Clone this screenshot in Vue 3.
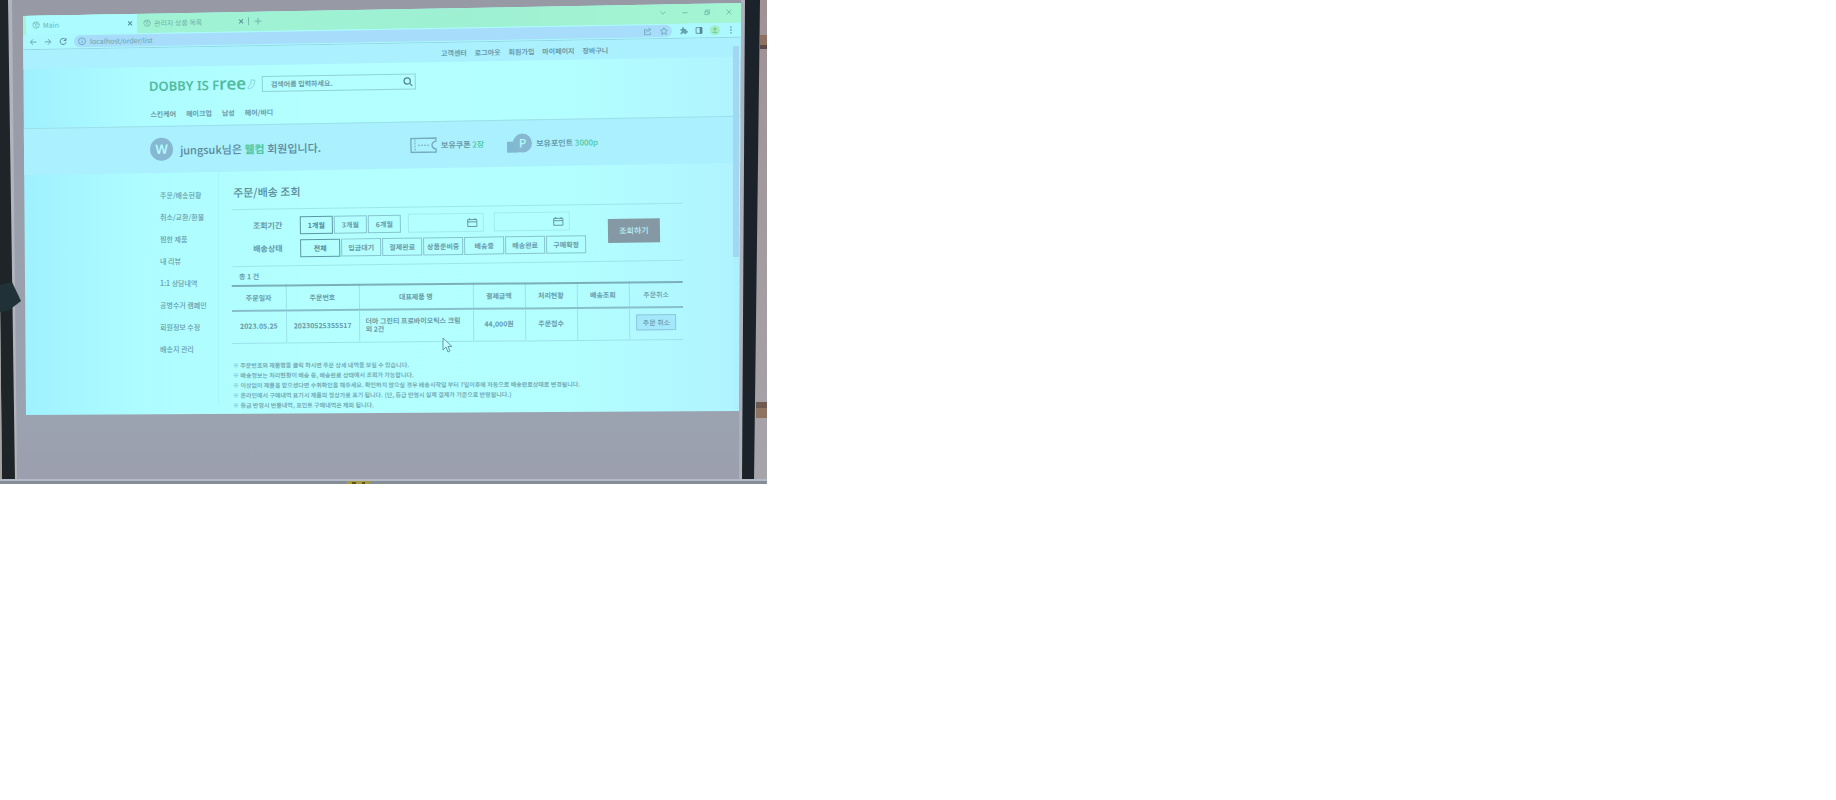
<script setup>
import { ref } from 'vue'

const topLinks = ['고객센터', '로그아웃', '회원가입', '마이페이지', '장바구니']
const categories = ['스킨케어', '메이크업', '남성', '헤어/바디']
const sideLinks = ['주문/배송현황', '취소/교환/환불', '찜한 제품', '내 리뷰', '1:1 상담내역', '공병수거 캠페인', '회원정보 수정', '배송지 관리']
const periods = ['1개월', '3개월', '6개월']
const states = ['전체', '입금대기', '결제완료', '상품준비중', '배송중', '배송완료', '구매확정']
const columns = ['주문일자', '주문번호', '대표제품 명', '결제금액', '처리현황', '배송조회', '주문취소']
const notes = [
  '※ 주문번호와 제품명을 클릭 하시면 주문 상세 내역을 보실 수 있습니다.',
  '※ 배송정보는 처리현황이 배송 중, 배송완료 상태에서 조회가 가능합니다.',
  '※ 이상없이 제품을 받으셨다면 수취확인을 해주세요. 확인하지 않으실 경우 배송시작일 부터 7일이후에 자동으로 배송완료상태로 변경됩니다.',
  '※ 온라인에서 구매내역 표기시 제품의 정상가로 표기 됩니다. (단, 등급 반영시 실제 결제가 기준으로 반영됩니다.)',
  '※ 등급 반영시 반품내역, 포인트 구매내역은 제외 됩니다.'
]
const period = ref('1개월')
const state = ref('전체')
const dateFrom = ref('')
const dateTo = ref('')
</script>

<template>
  <div class="photo">
    <svg class="room" viewBox="0 0 767 484" preserveAspectRatio="none" aria-hidden="true">
      <defs>
        <linearGradient id="wall" x1="0" y1="0" x2="0" y2="1">
          <stop offset="0" stop-color="#9799a4" />
          <stop offset="0.84" stop-color="#9ba3b0" />
          <stop offset="1" stop-color="#9b9fae" />
        </linearGradient>
        <linearGradient id="side" x1="0" y1="0" x2="0" y2="1">
          <stop offset="0" stop-color="#9f9295" />
          <stop offset="1" stop-color="#a7a4ab" />
        </linearGradient>
      </defs>
      <rect width="767" height="484" fill="url(#wall)" />
      <path d="M8 0H12L17 479H14Z" fill="#b1b4bd" />
      <path d="M0 0H8L15 479H2L0 300Z" fill="#1e2427" />
      <path d="M0 290L2 479H0Z" fill="#a6a4a2" />
      <path d="M760 0H767V484H754Z" fill="url(#side)" />
      <path d="M741 0H745L743 479H739Z" fill="#aeb2bd" />
      <path d="M745 0H760L754 482H742Z" fill="#1b2229" />
      <path d="M760 35H767V49H760Z" fill="#8e7160" />
      <path d="M760 45H767V49H760Z" fill="#5d4a46" />
      <path d="M756 402H767V418H756Z" fill="#8c7460" />
      <path d="M756 402H767V408H756Z" fill="#6e5a50" />
      <path d="M0 479H767V481H0Z" fill="#b3bcc6" />
      <path d="M0 481H767V484H0Z" fill="#858d97" />
      <path d="M0 285L12 282L21 301L8 311L0 312Z" fill="#203238" />
      <path d="M347 481H371L369 484H347Z" fill="#a79b3d" />
      <path d="M352 482H356V484H352ZM362 482H365V484H362Z" fill="#5a5420" />
    </svg>

    <div class="screen">
      <header class="tabs">
        <div class="tab active">
          <svg class="i8" viewBox="0 0 16 16"><circle cx="8" cy="8" r="6.5" /><path d="M3 4L8 7L7 10L11 13M9 2L8 5L13 7" /></svg>
          <span>Main</span>
          <button class="bare" aria-label="탭 닫기"><svg class="i6" viewBox="0 0 12 12"><path d="M2 2L10 10M10 2L2 10" /></svg></button>
        </div>
        <div class="tab">
          <svg class="i8" viewBox="0 0 16 16"><circle cx="8" cy="8" r="6.5" /><path d="M3 4L8 7L7 10L11 13M9 2L8 5L13 7" /></svg>
          <span>관리자 상품 목록</span>
          <button class="bare" aria-label="탭 닫기"><svg class="i6" viewBox="0 0 12 12"><path d="M2 2L10 10M10 2L2 10" /></svg></button>
        </div>
        <button class="bare plus" aria-label="새 탭"><svg class="i8" viewBox="0 0 12 12"><path d="M6 1V11M1 6H11" /></svg></button>
        <div class="controls">
          <button class="bare" aria-label="탭 검색"><svg class="i6" viewBox="0 0 12 12"><path d="M1 3L6 8L11 3" /></svg></button>
          <button class="bare" aria-label="최소화"><svg class="i6" viewBox="0 0 12 12"><path d="M1 6H11" /></svg></button>
          <button class="bare" aria-label="이전 크기로"><svg class="i6" viewBox="0 0 12 12"><path d="M2 4H8V11H2ZM4 4V1H11V9H8" /></svg></button>
          <button class="bare" aria-label="닫기"><svg class="i6" viewBox="0 0 12 12"><path d="M1 1L11 11M11 1L1 11" /></svg></button>
        </div>
      </header>

      <div class="toolbar">
        <button class="bare" aria-label="뒤로"><svg class="i8" viewBox="0 0 12 12"><path d="M11 6H2M6 2L2 6L6 10" /></svg></button>
        <button class="bare" aria-label="앞으로"><svg class="i8" viewBox="0 0 12 12"><path d="M1 6H10M6 2L10 6L6 10" /></svg></button>
        <button class="bare dark" aria-label="새로고침"><svg class="i8" viewBox="0 0 12 12"><path d="M10 3.5A4.5 4.5 0 1 0 10.500 7M10.500 1V4.500H7" /></svg></button>
        <div class="omnibox">
          <svg class="i8" viewBox="0 0 14 14"><circle cx="7" cy="7" r="6" /><path d="M7 6V10M7 3.500V4.500" /></svg>
          <input aria-label="주소" value="localhost/order/list" />
          <svg class="i8" viewBox="0 0 14 14"><path d="M5 4H1V13H11V9M4 9Q5 4 10 4M8 1L12 4L8 7" /></svg>
          <svg class="i8" viewBox="0 0 14 14"><path d="M7 1L9 5L13 5.500L10 8.500L11 13L7 10.500L3 13L4 8.500L1 5.500L5 5Z" /></svg>
        </div>
        <svg class="i8 solid" viewBox="0 0 14 14"><path d="M1 4H4C3 0 8 0 7.500 4H11V7C15 6.500 15 11 11 10.500V13H8C8 10 4 10 4 13H1V10C4 10 4 7 1 7Z" /></svg>
        <svg class="i8 dark" viewBox="0 0 14 14"><path d="M2 2H12V12H2Z" /><path d="M9 2H12V12H9Z" fill="currentColor" /></svg>
        <svg class="avatar" viewBox="0 0 16 16"><circle cx="8" cy="8" r="8" fill="#a3edc0" /><circle cx="8" cy="6" r="2.500" fill="#71cba0" /><path d="M3 12.500Q8 7.500 13 12.500Z" fill="#71cba0" /></svg>
        <svg class="i8 solid" viewBox="0 0 14 14"><circle cx="7" cy="2" r="1.500" /><circle cx="7" cy="7" r="1.500" /><circle cx="7" cy="12" r="1.500" /></svg>
      </div>

      <div class="page">
        <nav class="topnav" aria-label="회원 메뉴">
          <a v-for="l in topLinks" :key="l" href="#">{{ l }}</a>
        </nav>

        <div class="brandbar">
          <div class="brandrow">
            <a class="logo" href="#"><span>DOBBY IS F<b>ree</b></span>
              <svg viewBox="0 0 14 18"><path d="M7 2L13 3L11 10Q9 15 4 16Q0 16 2 13L6 9Z" /></svg>
            </a>
            <form class="search" @submit.prevent>
              <input type="text" aria-label="검색어" placeholder="검색어를 입력하세요." />
              <button class="bare" aria-label="검색"><svg viewBox="0 0 16 16"><circle cx="7" cy="7" r="5" /><path d="M11 11L15 15" /></svg></button>
            </form>
          </div>
          <nav class="cats" aria-label="카테고리">
            <a v-for="c in categories" :key="c" href="#">{{ c }}</a>
          </nav>
        </div>

        <section class="member">
          <span class="grade">W</span>
          <p class="hello">jungsuk님은 <em>웰컴</em> 회원입니다.</p>
          <svg class="coupon" viewBox="0 0 27 16">
            <path d="M1 1H26V4Q22 5 22 8Q22 11 26 12V15H1Z" />
            <path class="thin" d="M5 2V14" stroke-dasharray="2 1" />
            <path class="thin" d="M8 8H20" stroke-dasharray="2 1" />
          </svg>
          <p class="asset">보유쿠폰 <em>2장</em></p>
          <span class="point"><span>P</span></span>
          <p class="asset">보유포인트 <em>3000p</em></p>
        </section>

        <div class="body">
          <nav class="side" aria-label="마이페이지 메뉴">
            <a v-for="l in sideLinks" :key="l" href="#">{{ l }}</a>
          </nav>
          <main>
            <h1>주문/배송 조회</h1>
            <form class="filters" @submit.prevent>
              <div class="fields">
                <div class="row">
                  <span class="label">조회기간</span>
                  <div class="group">
                    <button v-for="p in periods" :key="p" type="button" class="opt short" :class="{ on: p === period }" @click="period = p">{{ p }}</button>
                  </div>
                  <label class="date"><input v-model="dateFrom" aria-label="시작일" /><svg viewBox="0 0 12 10"><path d="M1 1.500H11V9H1ZM1 4H11M3 0V2M9 0V2" /></svg></label>
                  <label class="date"><input v-model="dateTo" aria-label="종료일" /><svg viewBox="0 0 12 10"><path d="M1 1.500H11V9H1ZM1 4H11M3 0V2M9 0V2" /></svg></label>
                </div>
                <div class="row">
                  <span class="label">배송상태</span>
                  <div class="group">
                    <button v-for="s in states" :key="s" type="button" class="opt" :class="{ on: s === state }" @click="state = s">{{ s }}</button>
                  </div>
                </div>
              </div>
              <button class="submit">조회하기</button>
            </form>
            <p class="total">총 1 건</p>
            <table>
              <colgroup><col class="c1" /><col class="c2" /><col class="c3" /><col class="c4" /><col class="c4" /><col class="c4" /><col class="c1" /></colgroup>
              <thead>
                <tr><th v-for="c in columns" :key="c" scope="col">{{ c }}</th></tr>
              </thead>
              <tbody>
                <tr>
                  <td>2023.05.25</td>
                  <td>20230525355517</td>
                  <td class="name">더마 그린티 프로바이오틱스 크림 외 2건</td>
                  <td>44,000원</td>
                  <td>주문접수</td>
                  <td></td>
                  <td><button class="cancel">주문 취소</button></td>
                </tr>
              </tbody>
            </table>
            <ul class="notes">
              <li v-for="n in notes" :key="n">{{ n }}</li>
            </ul>
          </main>
        </div>
        <div class="scrollbar"><i></i></div>
      </div>
      <svg class="cursor" viewBox="0 0 11 16" aria-hidden="true"><path d="M1 1V13L4 10L6 15L8 14L6 9.500H10Z" /></svg>
    </div>
  </div>
</template>

<style>
body {
  margin: 0;
  background: #fff;
}
</style>

<style scoped>
* {
  box-sizing: border-box;
}
.photo {
  position: relative;
  width: 100%;
  max-width: 767px;
  padding: 3px 26px 69px 23px;
  font-family: "Noto Sans CJK KR", "Noto Sans", sans-serif;
  font-size: 7px;
  line-height: 10px;
  color: #6a9aa8;
}
.screen {
  position: relative;
  height: 412px;
  overflow: hidden;
  padding-top: 6px;
  background: linear-gradient(90deg, #9ff1ff 0, #adfcff 16%, #b4ffff 40%, #b3feff 76%, #aff3ff 100%);
  clip-path: polygon(0 13px, 100% 0, calc(100% - 2px) 408px, 3px 100%);
}
a {
  color: inherit;
  text-decoration: none;
}
p, h1, ul {
  margin: 0;
  padding: 0;
}
em {
  font-style: normal;
  color: #4ec79f;
}
button, input {
  font: inherit;
  color: inherit;
}
input {
  min-width: 0;
  flex: 1;
  padding: 0;
  border: 0;
  outline: 0;
  background: none;
}
.bare {
  display: flex;
  padding: 0;
  border: 0;
  background: none;
}
svg {
  flex: none;
  fill: none;
  stroke: currentColor;
}
.room {
  position: absolute;
  inset: 0;
  width: 100%;
  height: 100%;
  stroke: none;
}
.i8 {
  width: 8px;
  height: 8px;
  stroke-width: 1.4;
}
.i6 {
  width: 6px;
  height: 6px;
  stroke-width: 2;
}
.solid {
  fill: currentColor;
  stroke: none;
}
.avatar {
  width: 10px;
  height: 10px;
  stroke: none;
}

.tabs {
  display: flex;
  align-items: center;
  height: 20px;
  padding: 0 8px 0 3px;
  background: linear-gradient(90deg, #a2f4d6, #9df0d2 60%, #a4f5d2);
  box-shadow: 0 -8px 0 #9ff1d4;
  transform: rotate(-1deg);
  color: #6fb2ac;
}
.tab {
  display: flex;
  align-items: center;
  gap: 3px;
  width: 111px;
  height: 20px;
  padding: 0 4px 0 6px;
}
.tab.active {
  background: #acfbff;
  box-shadow: 0 -8px 0 #acfbff;
  border-radius: 0 4px 0 0;
}
.tab span {
  flex: 1;
}
.tab .bare {
  color: #548e94;
}
.plus {
  padding-left: 5px;
  border-left: 1px solid #76bcae;
}
.controls {
  display: flex;
  gap: 16px;
  margin: 0 1px 3px auto;
}
.controls svg {
  stroke-width: 1.6;
}
.toolbar {
  display: flex;
  align-items: center;
  gap: 7px;
  height: 15px;
  padding: 0 6px;
  background: #acf8ff;
  border-bottom: 1px solid #94d5e5;
  transform: rotate(-1deg);
  color: #64a3b2;
}
.omnibox {
  display: flex;
  flex: 1;
  align-items: center;
  gap: 4px;
  height: 12px;
  margin-right: 1px;
  padding: 0 4px;
  border-radius: 6px;
  background: #a7dcfb;
}
.omnibox svg:last-child {
  margin-left: 4px;
}
.dark {
  color: #568592;
}

.page {
  position: relative;
}
.topnav {
  display: flex;
  align-items: center;
  gap: 8px;
  height: 19px;
  padding-left: 418px;
  background: #aaf0ff;
  transform: rotate(-1deg);
  font-weight: 700;
}
.brandbar {
  height: 59px;
  padding: 10px 0 0 126px;
  transform: rotate(-1deg);
}
.brandrow {
  display: flex;
  align-items: center;
  gap: 8px;
}
.logo {
  display: flex;
  align-items: center;
  gap: 1px;
  width: 105px;
  font: 600 13px/16px "Noto Sans", sans-serif;
  color: #52bb9f;
  white-space: nowrap;
}
.logo b {
  font-size: 17px;
  font-weight: 600;
}
.logo svg {
  width: 9px;
  height: 12px;
  stroke: #84d2dc;
  stroke-width: 1.4;
}
.search {
  display: flex;
  align-items: center;
  width: 154px;
  height: 16px;
  padding: 0 2px 0 8px;
  border: 1px solid #8fd2d8;
  font-weight: 700;
}
.search input::placeholder {
  color: #6a9aa8;
  opacity: 1;
}
.search svg {
  width: 10px;
  height: 10px;
  stroke: #4f8390;
  stroke-width: 2;
}
.cats {
  display: flex;
  gap: 10px;
  padding: 15px 0 0 1px;
  font-weight: 700;
}
.member {
  display: flex;
  align-items: center;
  height: 47px;
  padding: 0 0 1px 127px;
  border-top: 1px solid #9ce0e8;
  background: #aaf0ff;
  transform: rotate(-1deg);
}
.grade {
  width: 23px;
  height: 23px;
  border-radius: 50%;
  background: #86b8d2;
  color: #b5fbff;
  font: 600 13px/23px "Noto Sans", sans-serif;
  text-align: center;
}
.hello {
  width: 237px;
  padding-left: 7px;
  font-size: 11px;
  line-height: 16px;
  font-weight: 500;
  color: #5b8997;
}
.hello em {
  font-weight: 700;
}
.coupon {
  width: 27px;
  height: 16px;
  stroke: #76acbd;
  stroke-width: 1.4;
}
.coupon .thin {
  stroke-width: 1;
}
.asset {
  padding-left: 4px;
  font-size: 8px;
  line-height: 12px;
  font-weight: 700;
}
.asset em {
  font-weight: 500;
}
.point {
  display: flex;
  justify-content: flex-end;
  align-items: flex-end;
  width: 25px;
  height: 19px;
  margin-left: 23px;
  background: linear-gradient(#80b7d1, #80b7d1) 0 100% / 12px 11px no-repeat;
}
.point span {
  width: 19px;
  height: 19px;
  border-radius: 50%;
  background: #86b8d2;
  color: #b5fbff;
  font: 500 12px/19px "Noto Sans", sans-serif;
  text-align: center;
}

.body {
  display: flex;
  padding: 0 58px 0 137px;
}
.side {
  display: flex;
  flex-direction: column;
  gap: 12px;
  width: 59px;
  height: 234px;
  padding-top: 21px;
  border-right: 1px solid #a9f4f9;
  font-weight: 500;
}
main {
  flex: 1;
  min-width: 0;
  margin-left: 13px;
}
h1 {
  height: 37px;
  padding: 11px 0 0 1px;
  font-size: 11px;
  line-height: 16px;
  font-weight: 500;
  color: #5b8997;
  transform: rotate(-1deg);
}
.filters {
  display: flex;
  align-items: center;
  height: 58px;
  padding-bottom: 2px;
  border-top: 1px solid #9de5ea;
  border-bottom: 1px solid #9de5ea;
  transform: rotate(-0.8deg);
}
.fields {
  display: flex;
  flex-direction: column;
  gap: 5px;
}
.row {
  display: flex;
  align-items: center;
}
.label {
  width: 68px;
  padding-left: 21px;
  font-size: 8px;
  font-weight: 700;
}
.group {
  display: flex;
  gap: 1px;
}
.opt {
  width: 40px;
  height: 18px;
  padding: 0;
  border: 1px solid #86c5cf;
  background: none;
  font-weight: 700;
  white-space: nowrap;
}
.opt.short {
  width: 33px;
}
.opt.on {
  border-color: #5c98a4;
  color: #598794;
}
.date {
  display: flex;
  align-items: center;
  width: 76px;
  height: 19px;
  margin-left: 7px;
  padding: 0 5px;
  border: 1px solid #a2eaf0;
}
.date + .date {
  margin-left: 10px;
}
.date svg {
  width: 11px;
  height: 10px;
  stroke: #5b8f9c;
}
.submit {
  width: 52px;
  height: 24px;
  margin: 0 0 2px 22px;
  padding: 0;
  border: 0;
  background: #8599a5;
  color: #b9f2f7;
  font-size: 8px;
  font-weight: 500;
}
.total {
  height: 19px;
  padding: 5px 0 0 7px;
  font-weight: 700;
  transform: rotate(-0.6deg);
}
table {
  width: 100%;
  table-layout: fixed;
  border-collapse: collapse;
  border-top: 2px solid #7bb0bb;
  transform: rotate(-0.5deg);
}
.c1 { width: 54px; }
.c2 { width: 73px; }
.c4 { width: 52px; }
th, td {
  padding: 0 0 2px;
  border-left: 1px solid #9de2ea;
  font-weight: 700;
  text-align: center;
}
th:first-child, td:first-child {
  border-left: 0;
}
th {
  height: 25px;
  border-bottom: 2px solid #87c0ca;
}
td {
  height: 32px;
  border-bottom: 1px solid #9de2ea;
}
th:last-child, td:last-child {
  font-weight: 500;
}
td.name {
  padding: 0 10px 2px 6px;
  line-height: 8px;
  text-align: left;
}
.cancel {
  width: 40px;
  height: 16px;
  padding: 0;
  border: 1px solid #8cc9da;
  background: #a6e8fb;
}
.notes {
  padding: 18px 0 0 1px;
  list-style: none;
  font-size: 6px;
  font-weight: 700;
  white-space: nowrap;
  color: #78adb8;
  transform: rotate(-0.2deg);
}
.scrollbar {
  position: absolute;
  top: -2px;
  right: 2px;
  width: 6px;
  height: 372px;
  background: #adf0ff;
}
.scrollbar i {
  display: block;
  height: 211px;
  margin-top: 4px;
  background: #a1d7f0;
}
.cursor {
  position: absolute;
  left: 419px;
  top: 334px;
  width: 11px;
  height: 16px;
  fill: #c3fbff;
  stroke: #649aa8;
}
</style>
